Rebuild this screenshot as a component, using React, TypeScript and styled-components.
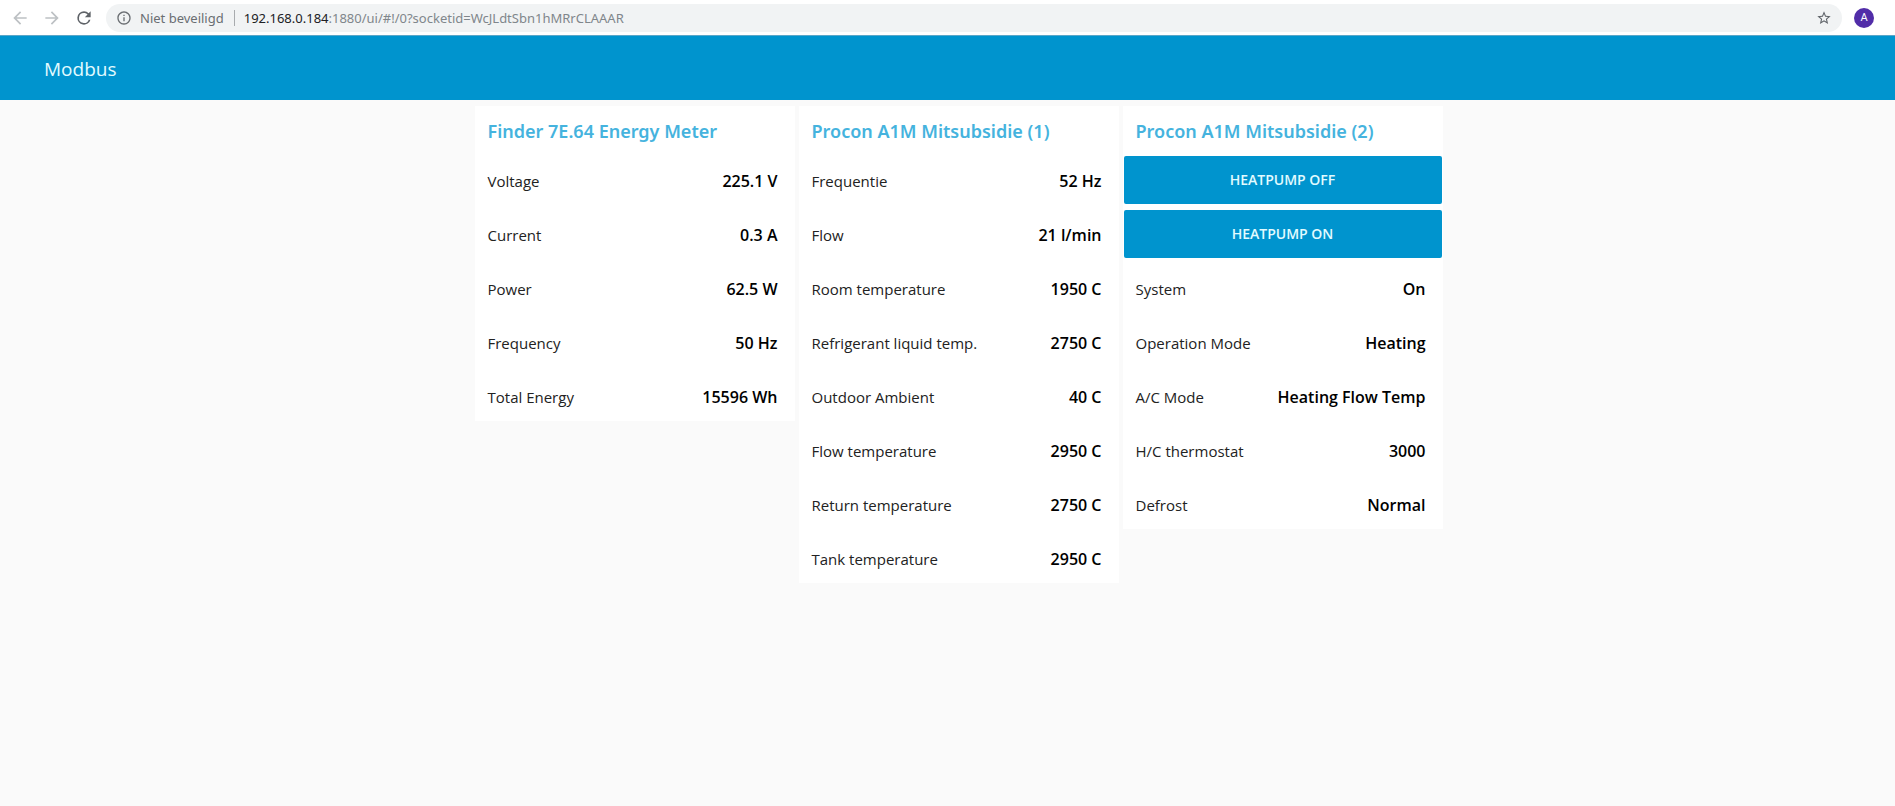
import React from "react";
import styled, { createGlobalStyle } from "styled-components";

const GlobalStyle = createGlobalStyle`
  * { box-sizing: border-box; }
  html { background: #fafafa; }
  body { margin: 0; color: #111; font-family: "Open Sans", "Noto Sans", sans-serif; font-size: 15px; }
  button { font-family: inherit; border: 0; padding: 0; cursor: pointer; }
  svg { display: block; }
`;

const BrowserBar = styled.div`
  display: flex;
  align-items: center;
  height: 35px;
  padding: 0 21px 0 8px;
  background: #fff;
`;

const NavButton = styled.button`
  display: grid;
  place-items: center;
  width: 24px;
  height: 24px;
  margin-right: 8px;
  background: none;
  color: #5f6368;
  &:disabled { color: #bdc1c4; cursor: default; }
`;

const AddressBar = styled.div`
  flex: 1;
  display: flex;
  align-items: center;
  min-width: 0;
  height: 28px;
  margin-left: 2px;
  padding: 0 10px;
  border-radius: 14px;
  background: #f1f3f4;
  font-family: "Noto Sans", sans-serif;
  font-size: 13px;
  line-height: 16px;
`;

const SiteInfo = styled.button`
  display: flex;
  align-items: center;
  gap: 8px;
  background: none;
  color: #6a6e72;
  font-size: 13px;
  white-space: nowrap;
`;

const Divider = styled.span`
  width: 1px;
  height: 16px;
  margin: 0 9px 0 10px;
  background: #a8abae;
`;

const Url = styled.div`
  flex: 1;
  min-width: 0;
  overflow: hidden;
  color: #80868b;
  white-space: nowrap;
`;

const Host = styled.span`
  color: #202124;
`;

const StarButton = styled.button`
  background: none;
  color: #5f6368;
`;

const Avatar = styled.button`
  width: 20px;
  height: 20px;
  margin-left: 12px;
  border-radius: 50%;
  background: #512da8;
  color: #fff;
  font-family: Roboto, sans-serif;
  font-size: 11px;
  line-height: 20px;
`;

const Header = styled.header`
  display: flex;
  align-items: center;
  height: 65px;
  padding: 2px 44px 0;
  border-top: 1px solid #5aa6c8;
  background: #0094ce;
`;

const Title = styled.h1`
  margin: 0;
  color: #e2fbff;
  font-size: 19px;
  font-weight: 400;
`;

const Dashboard = styled.main`
  display: flex;
  flex-wrap: wrap;
  justify-content: center;
  align-items: flex-start;
  gap: 4px;
  padding: 6px 0 6px 22px;
`;

const Card = styled.section`
  width: 320px;
  padding: 0 1px 1px;
  background: #fff;
`;

const CardTitle = styled.h2`
  margin: 0;
  padding: 0 12px;
  color: #45b3de;
  font-family: "Noto Sans", sans-serif;
  font-size: 18px;
  font-weight: 600;
  line-height: 50px;
`;

const Actions = styled.div`
  display: grid;
  gap: 6px;
  margin-bottom: 6px;
`;

const ActionButton = styled.button`
  height: 48px;
  padding-bottom: 2px;
  border-radius: 2px;
  background: #0094ce;
  color: #e2fbff;
  font-size: 14px;
  font-weight: 600;
  text-transform: uppercase;
`;

const Readings = styled.dl`
  display: grid;
  gap: 6px;
  margin: 0;
`;

const Reading = styled.div`
  display: flex;
  align-items: center;
  justify-content: space-between;
  height: 48px;
  padding: 2px 16px 0 12px;
`;

const Label = styled.dt`
  color: #222;
`;

const Value = styled.dd`
  margin: 0;
  color: #000;
  font-size: 16px;
  font-weight: 600;
`;

type Group = { title: string; actions?: string[]; readings: [string, string][] };

const groups: Group[] = [
  {
    title: "Finder 7E.64 Energy Meter",
    readings: [
      ["Voltage", "225.1 V"],
      ["Current", "0.3 A"],
      ["Power", "62.5 W"],
      ["Frequency", "50 Hz"],
      ["Total Energy", "15596 Wh"],
    ],
  },
  {
    title: "Procon A1M Mitsubsidie (1)",
    readings: [
      ["Frequentie", "52 Hz"],
      ["Flow", "21 l/min"],
      ["Room temperature", "1950 C"],
      ["Refrigerant liquid temp.", "2750 C"],
      ["Outdoor Ambient", "40 C"],
      ["Flow temperature", "2950 C"],
      ["Return temperature", "2750 C"],
      ["Tank temperature", "2950 C"],
    ],
  },
  {
    title: "Procon A1M Mitsubsidie (2)",
    actions: ["Heatpump off", "Heatpump on"],
    readings: [
      ["System", "On"],
      ["Operation Mode", "Heating"],
      ["A/C Mode", "Heating Flow Temp"],
      ["H/C thermostat", "3000"],
      ["Defrost", "Normal"],
    ],
  },
];

const Icon = ({ d, size }: { d: string; size: number }) => (
  <svg width={size} height={size} viewBox="0 0 24 24" fill="currentColor" aria-hidden="true">
    <path d={d} />
  </svg>
);

const BACK = "M20 11H7.83l5.59-5.59L12 4l-8 8 8 8 1.41-1.41L7.83 13H20v-2z";
const FORWARD = "M12 4l-1.41 1.41L16.17 11H4v2h12.17l-5.58 5.59L12 20l8-8z";
const RELOAD =
  "M17.65 6.35A7.96 7.96 0 0 0 12 4a8 8 0 1 0 7.73 10h-2.08A6 6 0 1 1 12 6c1.66 0 3.14.69 4.22 1.78L13 11h7V4l-2.35 2.35z";
const INFO =
  "M11 7h2v2h-2zm0 4h2v6h-2zm1-9C6.48 2 2 6.48 2 12s4.48 10 10 10 10-4.48 10-10S17.52 2 12 2zm0 18c-4.41 0-8-3.59-8-8s3.59-8 8-8 8 3.59 8 8-3.59 8-8 8z";
const STAR =
  "M22 9.24l-7.19-.62L12 2 9.19 8.63 2 9.24l5.46 4.73L5.82 21 12 17.27 18.18 21l-1.63-7.03L22 9.24zM12 15.4l-3.76 2.27 1-4.28-3.32-2.88 4.38-.38L12 6.1l1.71 4.04 4.38.38-3.32 2.88 1 4.28L12 15.4z";

export default function App() {
  return (
    <>
      <GlobalStyle />
      <BrowserBar>
        <NavButton disabled aria-label="Back"><Icon d={BACK} size={20} /></NavButton>
        <NavButton disabled aria-label="Forward"><Icon d={FORWARD} size={20} /></NavButton>
        <NavButton aria-label="Reload"><Icon d={RELOAD} size={20} /></NavButton>
        <AddressBar>
          <SiteInfo>
            <Icon d={INFO} size={16} />
            Niet beveiligd
          </SiteInfo>
          <Divider />
          <Url role="textbox" aria-label="Address" tabIndex={0}>
            <Host>192.168.0.184</Host>:1880/ui/#!/0?socketid=WcJLdtSbn1hMRrCLAAAR
          </Url>
          <StarButton aria-label="Bookmark"><Icon d={STAR} size={16} /></StarButton>
        </AddressBar>
        <Avatar aria-label="Profile">A</Avatar>
      </BrowserBar>
      <Header>
        <Title>Modbus</Title>
      </Header>
      <Dashboard>
        {groups.map((group) => (
          <Card key={group.title}>
            <CardTitle>{group.title}</CardTitle>
            {group.actions && (
              <Actions>
                {group.actions.map((action) => (
                  <ActionButton key={action}>{action}</ActionButton>
                ))}
              </Actions>
            )}
            <Readings>
              {group.readings.map(([label, value]) => (
                <Reading key={label}>
                  <Label>{label}</Label>
                  <Value>{value}</Value>
                </Reading>
              ))}
            </Readings>
          </Card>
        ))}
      </Dashboard>
    </>
  );
}
